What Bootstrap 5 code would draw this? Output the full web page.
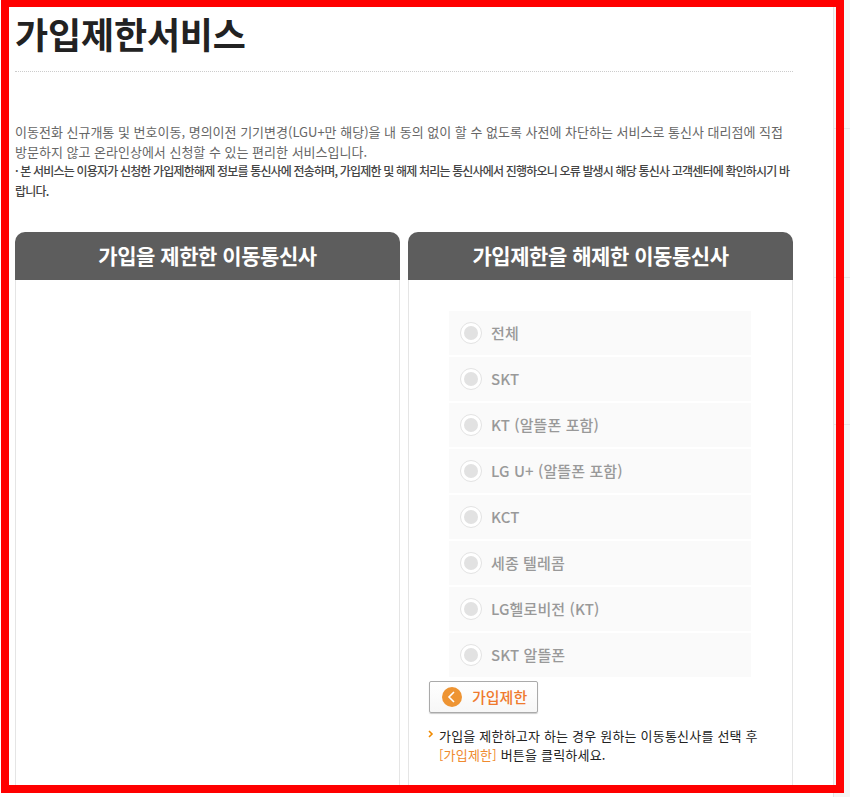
<!DOCTYPE html>
<html lang="ko">
<head>
<meta charset="utf-8">
<title>가입제한서비스</title>
<link href="https://cdn.jsdelivr.net/npm/bootstrap@5.3.0/dist/css/bootstrap.min.css" rel="stylesheet">
<style>
html,body{height:797px;overflow:hidden;background:#fff;}
body{font-family:"Noto Sans CJK KR","Noto Sans",sans-serif;margin:0;color:#666;position:relative;}
.svc-side{position:absolute;top:0;left:833px;width:17px;height:797px;background:#f5f5f5;border-left:1px solid #e3e3e3;}
.svc-rule{height:1px;background:#e6e6e6;}
.svc-rule-a{margin-top:128px;}
.svc-rule-b{margin-top:148px;}
.svc-rule-c{margin-top:146px;}
.svc-frame{box-sizing:border-box;width:843px;height:793px;margin-left:1px;border:8px solid #f00;border-top-width:7px;overflow:hidden;position:relative;}
.svc-inner{box-sizing:border-box;width:824px;height:100%;padding:0 40px 0 6px;background:#fff;}
.svc-title{font-size:36px;font-weight:700;line-height:50px;color:#222;margin:0;padding-top:1px;height:65px;border-bottom:1px dotted #ccc;letter-spacing:-.15px;}
.svc-desc{margin:50px 0 0;font-size:13px;line-height:19.7px;color:#666;}
.svc-desc strong{display:block;font-size:12px;font-weight:500;color:#444;letter-spacing:-.82px;}
.svc-panels{margin-top:31px;gap:8px;}
.svc-panel{width:385px;}
.svc-head{height:48px;background:#5d5d5d;color:#fff;border-radius:10px 10px 0 0;font-size:21px;font-weight:700;line-height:46px;text-align:center;margin:0;letter-spacing:-.46px;}
.svc-body{height:520px;border:solid #e5e5e5;border-width:0 1px;}
.svc-list{width:302px;margin:0 0 0 40px;padding-top:31px;gap:2px;}
.svc-row{height:44px;background:#fafafa;padding-left:11px;gap:9px;font-size:15px;font-weight:500;color:#999;letter-spacing:.1px;}
.svc-radio{width:22px;height:22px;border:1px solid #e3e3e3;border-radius:50%;background:#fff;padding:3px;flex:none;}
.svc-radio i{display:block;width:14px;height:14px;border-radius:50%;background:#e2e2e2;}
.svc-btn{width:109px;height:32px;margin:4px 0 0 20px;padding:0 0 0 12px;gap:10px;border:1px solid #aaa;border-radius:2px;background:linear-gradient(#fff,#f7f7f7);box-shadow:0 1px 1px #ccc;color:#ef7a2e;font-size:15px;font-weight:500;}
.svc-btn:hover{background:#fff;color:#ef7a2e;border-color:#aaa;}
.svc-note{margin:13px 0 0 20px;padding-left:10px;position:relative;font-size:13px;line-height:19px;color:#222;letter-spacing:.2px;}
.svc-note svg{position:absolute;left:-1px;top:4px;}
.svc-note span{color:#ef8a2e;}
</style>
</head>
<body>
<div class="svc-side"><div class="svc-rule svc-rule-a"></div><div class="svc-rule svc-rule-b"></div><div class="svc-rule svc-rule-c"></div></div>
<div class="svc-frame">
  <div class="svc-inner">
    <h1 class="svc-title">가입제한서비스</h1>
    <p class="svc-desc">이동전화 신규개통 및 번호이동, 명의이전 기기변경(LGU+만 해당)을 내 동의 없이 할 수 없도록 사전에 차단하는 서비스로 통신사 대리점에 직접 방문하지 않고 온라인상에서 신청할 수 있는 편리한 서비스입니다.<strong>· 본 서비스는 이용자가 신청한 가입제한해제 정보를 통신사에 전송하며, 가입제한 및 해제 처리는 통신사에서 진행하오니 오류 발생시 해당 통신사 고객센터에 확인하시기 바랍니다.</strong></p>
    <div class="d-flex svc-panels">
      <section class="svc-panel">
        <h2 class="svc-head">가입을 제한한 이동통신사</h2>
        <div class="svc-body"></div>
      </section>
      <section class="svc-panel">
        <h2 class="svc-head">가입제한을 해제한 이동통신사</h2>
        <div class="svc-body">
          <div class="d-flex flex-column svc-list">
            <div class="d-flex align-items-center svc-row"><span class="svc-radio"><i></i></span>전체</div>
            <div class="d-flex align-items-center svc-row"><span class="svc-radio"><i></i></span>SKT</div>
            <div class="d-flex align-items-center svc-row"><span class="svc-radio"><i></i></span>KT (알뜰폰 포함)</div>
            <div class="d-flex align-items-center svc-row"><span class="svc-radio"><i></i></span>LG U+ (알뜰폰 포함)</div>
            <div class="d-flex align-items-center svc-row"><span class="svc-radio"><i></i></span>KCT</div>
            <div class="d-flex align-items-center svc-row"><span class="svc-radio"><i></i></span>세종 텔레콤</div>
            <div class="d-flex align-items-center svc-row"><span class="svc-radio"><i></i></span>LG헬로비전 (KT)</div>
            <div class="d-flex align-items-center svc-row"><span class="svc-radio"><i></i></span>SKT 알뜰폰</div>
          </div>
          <button type="button" class="btn d-flex align-items-center svc-btn">
            <svg width="20" height="20" viewBox="0 0 20 20" aria-hidden="true"><circle cx="10" cy="10" r="10" fill="#ee9433"/><path d="M12 5 7 10l5 5" fill="none" stroke="#fff" stroke-width="1.6"/></svg>
            가입제한
          </button>
          <p class="svc-note"><svg width="6" height="8" viewBox="0 0 6 8" aria-hidden="true"><path d="M1 1l3 3-3 3" fill="none" stroke="#f08a00" stroke-width="1.6"/></svg>가입을 제한하고자 하는 경우 원하는 이동통신사를 선택 후<br><span>[가입제한]</span> 버튼을 클릭하세요.</p>
        </div>
      </section>
    </div>
  </div>
</div>
<script src="https://cdn.jsdelivr.net/npm/bootstrap@5.3.0/dist/js/bootstrap.bundle.min.js"></script>
</body>
</html>
